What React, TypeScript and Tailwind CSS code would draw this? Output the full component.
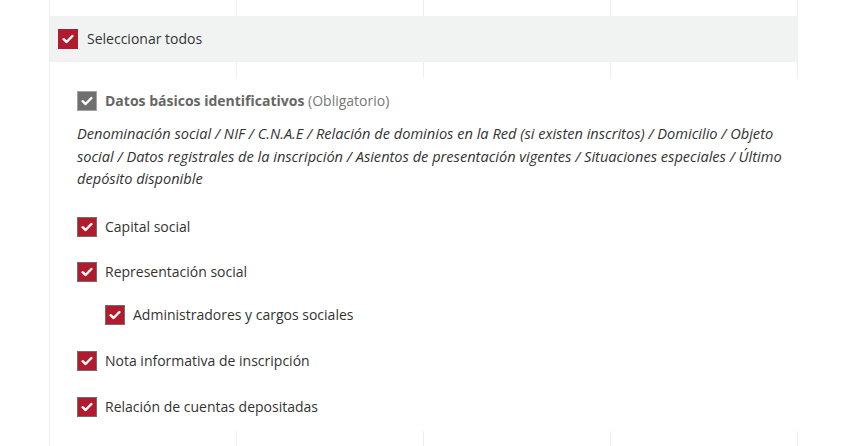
import React from "react";

function Check({ tone = "red" }: { tone?: "red" | "gray" | "plain" }) {
  const box =
    tone === "gray"
      ? "bg-[#6f6f6f] border border-[#a3a3a3]"
      : tone === "plain"
      ? "bg-[#b01c2e] border border-[#b01c2e]"
      : "bg-[#b01c2e] border border-[#6f6f6f]";
  return (
    <span className={`flex h-5 w-5 shrink-0 items-center justify-center ${box}`}>
      <svg width="12" height="10" viewBox="0 0 12 10" fill="none">
        <path d="M1.6 5.2 L4.6 8 L10.4 2" stroke="white" strokeWidth="2.4" strokeLinecap="round" strokeLinejoin="round" />
      </svg>
    </span>
  );
}

function Strip({ h }: { h: string }) {
  return (
    <div className={`grid grid-cols-4 ${h}`}>
      <div className="border-r border-[#efefef]" />
      <div className="border-r border-[#efefef]" />
      <div className="border-r border-[#efefef]" />
      <div className="border-r border-[#efefef]" />
    </div>
  );
}

function Row({ label, className = "" }: { label: string; className?: string }) {
  return (
    <div className={`flex items-center gap-2 ${className}`}>
      <Check />
      <span className="text-[14px] leading-5 text-[#333]">{label}</span>
    </div>
  );
}

export default function App() {
  return (
    <div className="h-[446px] w-[866px] overflow-hidden bg-white" style={{ fontFamily: '"Open Sans", "Liberation Sans", sans-serif' }}>
      <div className="ml-[49px] h-full w-[749px] border-l border-[#efefef]">
        <Strip h="h-4" />
        <div className="flex h-[46px] items-center gap-[9px] bg-[#f1f3f2] pl-[8px]">
          <Check tone="plain" />
          <span className="text-[14px] leading-5 text-[#333]">Seleccionar todos</span>
        </div>
        <Strip h="h-4" />
        <div className="pl-[27px] pt-[13px] pb-[14px]">
          <div className="flex items-center gap-2">
            <Check tone="gray" />
            <span className="text-[14px] leading-5 text-[#777]">
              <b className="font-bold text-[#666]">Datos básicos identificativos</b> (Obligatorio)
            </span>
          </div>
          <p className="mt-[11px] text-[14.6px] italic leading-[22.5px] text-[#333]">
            Denominación social / NIF / C.N.A.E / Relación de dominios en la Red (si existen inscritos) / Domicilio / Objeto social / Datos registrales de la inscripción / Asientos de presentación vigentes / Situaciones especiales / Último depósito disponible
          </p>
          <Row label="Capital social" className="mt-[27px]" />
          <Row label="Representación social" className="mt-[25px]" />
          <Row label="Administradores y cargos sociales" className="mt-[23px] pl-[28px]" />
          <Row label="Nota informativa de inscripción" className="mt-[26px]" />
          <Row label="Relación de cuentas depositadas" className="mt-[26px]" />
        </div>
        <Strip h="h-4" />
      </div>
    </div>
  );
}
